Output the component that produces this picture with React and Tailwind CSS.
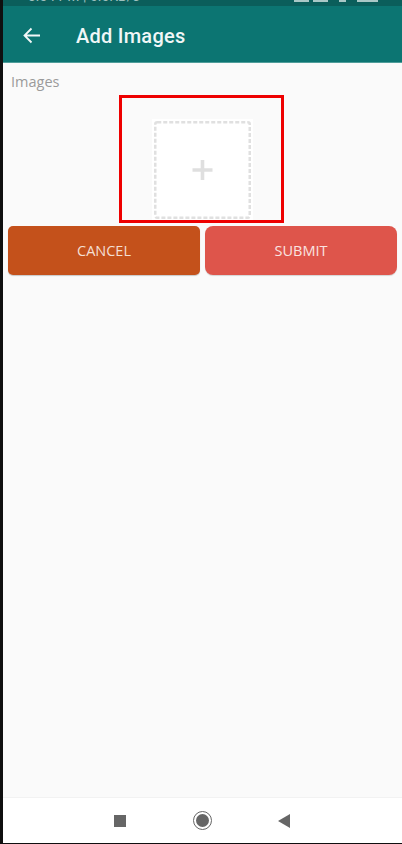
export default function App() {
  return (
    <div className="flex h-[844px] w-[402px] bg-[#0f0f0f] font-['Roboto',sans-serif]">
      <div className="w-[3px] shrink-0" />
      <div className="flex min-w-0 flex-1 flex-col">
        <div className="flex h-[6px] items-start justify-between overflow-hidden bg-[#0b5e5b] pl-[25px] pr-[24px]">
          <span className="-mt-[11px] text-[14px] leading-[14px] whitespace-nowrap text-[#9fc0be]">3:54 PM | 0.0KB/s</span>
          <div className="flex items-start gap-[11px]">
            <div className="flex gap-[4px]">
              <div className="h-[2px] w-[15px] bg-[#a9c8c6]" />
              <div className="h-[2px] w-[15px] bg-[#a9c8c6]" />
            </div>
            <div className="h-[2px] w-[7px] bg-[#a9c8c6]" />
            <div className="h-[2px] w-[21px] bg-[#a9c8c6]" />
          </div>
        </div>
        <header className="flex h-[57px] shrink-0 items-center border-b border-[#4f9d9a] bg-[#0c7572] pl-[20px] pt-[3px]">
          <svg width="17" height="17" viewBox="0 0 17 17" fill="none" stroke="#f2f8f8" strokeWidth="1.8" className="shrink-0">
            <path d="M17 8.5H1.5M8.5 1.5l-7 7 7 7" />
          </svg>
          <h1 className="ml-[36px] text-[20px] font-medium tracking-[0.25px] text-[#f1f7f7]">Add Images</h1>
        </header>
        <main className="flex-1 bg-[#fafafa]">
          <p className="pl-[8px] pt-[9px] font-['Open_Sans',sans-serif] text-[14.5px] leading-[19px] text-[#9a9a9a]">Images</p>
          <div className="ml-[116px] mt-[4px] flex h-[128px] w-[165px] items-end justify-center border-[3px] border-[#ee0000] pl-[2px]">
            <div className="flex h-[101px] w-[101px] items-center justify-center bg-white">
              <svg width="97" height="98" viewBox="0 0 97 98" fill="none">
                <rect x="1.25" y="1.25" width="94.5" height="95.5" rx="2" stroke="#e0e0e0" strokeWidth="2.5" strokeDasharray="4 2" />
                <path d="M46.7 39h3.6v8.2h8.2v3.6h-8.2V59h-3.6v-8.2h-8.2v-3.6h8.2z" fill="#dfdfdf" />
              </svg>
            </div>
          </div>
          <div className="mt-[3px] flex gap-[5px] pl-[5px] pr-[5px]">
            <button className="flex h-[49px] w-[192px] items-center justify-center rounded-[5px] bg-[#c4511b] font-['Open_Sans',sans-serif] text-[14.5px] text-[#f4dfd3] shadow-[0_1px_1px_rgba(0,0,0,0.2)]">CANCEL</button>
            <button className="flex h-[49px] w-[192px] items-center justify-center rounded-[8px] bg-[#de554b] font-['Open_Sans',sans-serif] text-[14.5px] text-[#fae3e0] shadow-[0_1px_1px_rgba(0,0,0,0.15)]">SUBMIT</button>
          </div>
        </main>
        <nav className="flex h-[46px] shrink-0 items-center border-t border-[#f2f2f2] bg-white pl-[111px]">
          <div className="h-[12px] w-[12px] bg-[#666666]" />
          <div className="ml-[67px] flex h-[19px] w-[19px] items-center justify-center rounded-full border-[1.5px] border-[#666666]">
            <div className="h-[13px] w-[13px] rounded-full bg-[#666666]" />
          </div>
          <svg width="12" height="14" viewBox="0 0 12 14" fill="#666666" className="ml-[66px]">
            <path d="M12 0v14L0 7z" />
          </svg>
        </nav>
        <div className="h-[1px] shrink-0 bg-[#0f0f0f]" />
      </div>
    </div>
  );
}
